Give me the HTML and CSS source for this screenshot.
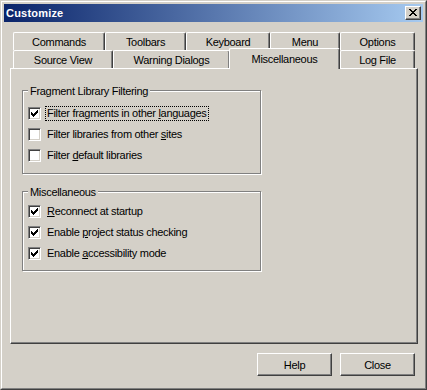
FILE: index.html
```html
<!DOCTYPE html>
<html>
<head>
<meta charset="utf-8">
<title>Customize</title>
<link rel="stylesheet" href="styles.css">
</head>
<body>
<div class="window">
  <div class="frame">
    <div class="titlebar">
      <span class="title">Customize</span>
      <button class="close-btn" aria-label="Close">
        <svg width="8" height="7" viewBox="0 0 8 7" shape-rendering="crispEdges">
          <path d="M0 0h2v1h1v1h2v-1h1v-1h2v1h-1v1h-1v1h-1v1h1v1h1v1h1v1h-2v-1h-1v-1h-2v1h-1v1h-2v-1h1v-1h1v-1h1v-1h-1v-1h-1v-1h-1z" fill="#000"/>
        </svg>
      </button>
    </div>
    <div class="content">
      <div class="tabs">
        <div class="tab-row">
          <div class="tab w-commands">Commands</div>
          <div class="tab w-toolbars">Toolbars</div>
          <div class="tab w-keyboard">Keyboard</div>
          <div class="tab w-menu">Menu</div>
          <div class="tab w-options">Options</div>
        </div>
        <div class="tab-row">
          <div class="tab w-source">Source View</div>
          <div class="tab w-warning">Warning Dialogs</div>
          <div class="tab w-misc selected">Miscellaneous</div>
          <div class="tab w-log">Log File</div>
        </div>
      </div>
      <div class="panel">
        <div class="group group-filter">
          <div class="legend">Fragment Library Filtering</div>
          <div class="options">
            <div class="opt"><span class="cb checked"><svg width="7" height="7" viewBox="0 0 7 7" shape-rendering="crispEdges"><path d="M6 0h1v3h-1v1h-1v1h-1v1h-1v1h-1v-1h-1v-1h-1v-3h1v1h1v1h1v-1h1v-1h1z" fill="#000"/></svg></span><span class="label focus">Filter fragments in other <u>l</u>anguages</span></div>
            <div class="opt"><span class="cb"></span><span class="label">Filter libraries from other <u>s</u>ites</span></div>
            <div class="opt"><span class="cb"></span><span class="label">Filter <u>d</u>efault libraries</span></div>
          </div>
        </div>
        <div class="group group-misc">
          <div class="legend">Miscellaneous</div>
          <div class="options">
            <div class="opt"><span class="cb checked"><svg width="7" height="7" viewBox="0 0 7 7" shape-rendering="crispEdges"><path d="M6 0h1v3h-1v1h-1v1h-1v1h-1v1h-1v-1h-1v-1h-1v-3h1v1h1v1h1v-1h1v-1h1z" fill="#000"/></svg></span><span class="label"><u>R</u>econnect at startup</span></div>
            <div class="opt"><span class="cb checked"><svg width="7" height="7" viewBox="0 0 7 7" shape-rendering="crispEdges"><path d="M6 0h1v3h-1v1h-1v1h-1v1h-1v1h-1v-1h-1v-1h-1v-3h1v1h1v1h1v-1h1v-1h1z" fill="#000"/></svg></span><span class="label">Enable <u>p</u>roject status checking</span></div>
            <div class="opt"><span class="cb checked"><svg width="7" height="7" viewBox="0 0 7 7" shape-rendering="crispEdges"><path d="M6 0h1v3h-1v1h-1v1h-1v1h-1v1h-1v-1h-1v-1h-1v-3h1v1h1v1h1v-1h1v-1h1z" fill="#000"/></svg></span><span class="label">Enable <u>a</u>ccessibility mode</span></div>
          </div>
        </div>
      </div>
      <div class="buttons">
        <button class="btn">Help</button>
        <button class="btn">Close</button>
      </div>
    </div>
  </div>
</div>
</body>
</html>
```
FILE: styles.css
```css
html, body {
  margin: 0;
  padding: 0;
  background: #d4d0c8;
}
body {
  font-family: "Liberation Sans", Arial, sans-serif;
  font-size: 11px;
  letter-spacing: -0.3px;
  color: #000;
}
.window {
  width: 427px;
  height: 390px;
  box-sizing: border-box;
  border: 1px solid;
  border-color: #d4d0c8 #404040 #404040 #d4d0c8;
  background: #d4d0c8;
}
.frame {
  height: 100%;
  box-sizing: border-box;
  border: 1px solid;
  border-color: #fff #808080 #808080 #fff;
  padding: 2px;
  display: flex;
  flex-direction: column;
}
.titlebar {
  height: 18px;
  flex: none;
  display: flex;
  align-items: center;
  justify-content: space-between;
  background: linear-gradient(to right, #0a246a, #a6caf0);
}
.title {
  color: #fff;
  font-weight: bold;
  letter-spacing: 0.2px;
  padding-left: 2px;
  line-height: 18px;
}
.close-btn {
  width: 16px;
  height: 14px;
  margin-right: 2px;
  padding: 0;
  box-sizing: border-box;
  background: #d4d0c8;
  border: 1px solid;
  border-color: #fff #404040 #404040 #fff;
  box-shadow: inset -1px -1px #808080;
  display: flex;
  align-items: center;
  justify-content: center;
}
.close-btn svg {
  display: block;
  margin-left: -1px;
  margin-top: -1px;
}
.content {
  flex: 1;
  display: flex;
  flex-direction: column;
  padding: 10px 5px 10px 6px;
}
.tabs {
  display: flex;
  flex-direction: column;
  padding: 0 3px;
}
.tab-row {
  display: flex;
  height: 18px;
  align-items: flex-start;
}
.tab {
  height: 18px;
  box-sizing: border-box;
  flex: none;
  border-top: 1px solid #fff;
  border-left: 1px solid #fff;
  border-right: 1px solid #404040;
  box-shadow: inset -1px 0 #808080;
  border-radius: 2px 2px 0 0;
  background: #d4d0c8;
  display: flex;
  align-items: center;
  justify-content: center;
  padding-top: 1px;
  white-space: nowrap;
}
.tab.selected {
  height: 21px;
  margin-top: -2px;
  margin-left: -1px;
  padding-top: 0;
  padding-bottom: 1px;
  position: relative;
  z-index: 1;
}
.w-commands { width: 92px; }
.w-toolbars { width: 81px; }
.w-keyboard { width: 84px; }
.w-menu { width: 70px; }
.w-options { width: 75px; }
.w-source { width: 100px; }
.w-warning { width: 117px; }
.w-misc { width: 111px; }
.w-log { width: 75px; }
.panel {
  height: 276px;
  box-sizing: border-box;
  flex: none;
  border: 1px solid;
  border-color: #fff #404040 #404040 #fff;
  box-shadow: inset -1px -1px #808080;
  padding: 21px 11px 0 11px;
  display: flex;
  flex-direction: column;
}
.group {
  width: 239px;
  box-sizing: border-box;
  border: 1px solid #808080;
  box-shadow: inset 1px 1px #fff, 1px 1px #fff;
  display: flex;
  flex-direction: column;
}
.group-misc {
  margin-top: 17px;
}
.legend {
  align-self: flex-start;
  margin-top: -7px;
  margin-left: 5px;
  padding: 0 2px;
  line-height: 14px;
  background: #d4d0c8;
}
.options {
  display: flex;
  flex-direction: column;
  padding-left: 5px;
}
.group-filter .options {
  margin-top: 5px;
  padding-bottom: 7px;
}
.group-misc .options {
  margin-top: 2px;
  padding-bottom: 6px;
}
.opt {
  height: 21px;
  display: flex;
  align-items: center;
}
.cb {
  width: 13px;
  height: 13px;
  box-sizing: border-box;
  flex: none;
  background: #fff;
  border: 1px solid;
  border-color: #808080 #fff #fff #808080;
  box-shadow: inset 1px 1px #404040, inset -1px -1px #d4d0c8;
  display: flex;
  align-items: center;
  justify-content: center;
}
.cb svg {
  display: block;
}
.label {
  margin-left: 4px;
  padding: 0 1px;
  border: 1px solid transparent;
  line-height: 13px;
  white-space: nowrap;
}
.label.focus {
  border: 1px dotted #000;
}
.buttons {
  display: flex;
  justify-content: flex-end;
  gap: 8px;
  margin-top: 9px;
  padding-right: 3px;
}
.btn {
  width: 75px;
  height: 23px;
  box-sizing: border-box;
  padding: 0;
  font-family: "Liberation Sans", Arial, sans-serif;
  font-size: 11px;
  letter-spacing: -0.3px;
  color: #000;
  background: #d4d0c8;
  border: 1px solid;
  border-color: #fff #404040 #404040 #fff;
  box-shadow: inset -1px -1px #808080;
}
```
